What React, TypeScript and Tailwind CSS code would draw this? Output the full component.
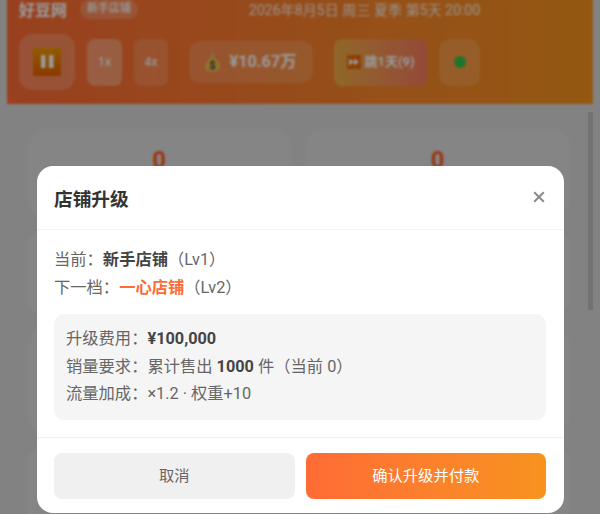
export default function App() {
  const cell = "rounded-2xl bg-[#dedede] border border-[#d8d8d8] flex justify-center";
  return (
    <div className="relative h-[514px] w-[600px] overflow-hidden bg-[#d9d9d9] font-['Roboto','Noto_Sans_CJK_SC',sans-serif]">
      {/* page underneath */}
      <div className="mx-[7px] h-[104px] bg-linear-to-r from-[#ff6b35] to-[#f7931e] px-3 text-white">
        <div className="flex h-[34px] items-start">
          <span className="w-[61px] text-base font-bold leading-[21px]">好豆网</span>
          <span className="flex h-[19px] w-[58px] items-center justify-center rounded-full bg-white/20 text-[11px] font-medium">新手店铺</span>
          <span className="ml-[111px] text-[14.1px] leading-[21px] text-white/85">2026年8月5日 周三 夏季 第5天 20:00</span>
        </div>
        <div className="flex items-center">
          <div className="flex h-[56px] w-[56px] items-center justify-center rounded-[14px] bg-white/20">
            <svg width="28" height="28" viewBox="0 0 28 28">
              <defs>
                <linearGradient id="pz" x1="0" y1="0" x2="0" y2="1">
                  <stop offset="0" stopColor="#f09a00" />
                  <stop offset="1" stopColor="#e86000" />
                </linearGradient>
              </defs>
              <rect width="28" height="28" fill="url(#pz)" />
              <rect x="8" y="7" width="4.5" height="13" fill="#fff" />
              <rect x="16" y="7" width="4.5" height="13" fill="#fff" />
            </svg>
          </div>
          <div className="ml-3 flex h-[47px] w-[35px] items-center justify-center rounded-lg bg-white/30 text-xs font-medium text-white/90">1x</div>
          <div className="ml-3 flex h-[47px] w-[34px] items-center justify-center rounded-lg bg-white/15 text-xs font-medium text-white/90">4x</div>
          <div className="ml-[21px] flex h-[42px] w-[124px] items-center justify-center gap-[9px] rounded-xl bg-white/15 text-[16.3px] font-bold">
            <svg width="15" height="19" viewBox="0 0 15 19">
              <path d="M5.5 0.5h4l-1 3.5h-2z" fill="#d9b98a" />
              <path d="M5.5 4.5h4C12 7 15 10 15 13.5 15 17 12 18.5 7.5 18.5S0 17 0 13.5C0 10 3 7 5.5 4.5z" fill="#f2c14e" />
              <text x="7.5" y="16" textAnchor="middle" fontSize="11" fontWeight="700" fill="#3f3f3f">$</text>
            </svg>
            <span>¥10.67万</span>
          </div>
          <div className="ml-[21px] flex h-[47px] w-[93px] items-center justify-center gap-1 rounded-lg bg-linear-to-r from-[#f0ac44] to-[#f87a5e] text-[13px] font-semibold">
            <svg width="14" height="14" viewBox="0 0 14 14">
              <rect width="14" height="14" fill="#e86a00" />
              <path d="M2 3.5 7 7 2 10.5zM7 3.5 12 7 7 10.5z" fill="#fff" />
            </svg>
            <span>跳1天(9)</span>
          </div>
          <div className="ml-3 flex h-[47px] w-[41px] items-center justify-center rounded-xl bg-white/15">
            <span className="h-3 w-3 rounded-full bg-[#34c04a]" />
          </div>
        </div>
      </div>

      <div className="ml-[26px] mr-[29px] mt-[25px] grid grid-cols-2 grid-rows-[87px_85px_103px_80px] gap-x-3 gap-y-[14px]">
        {[0, 1, 2, 3, 4, 5, 6, 7].map((i) => (
          <div key={i} className={cell}>
            {i < 2 && <span className="mt-[16px] text-[24px] font-bold leading-[28px] text-[#ff5a1f]">0</span>}
          </div>
        ))}
      </div>

      {/* dimming layer and dialog */}
      <div className="absolute inset-0 flex items-end bg-black/40 pb-px pl-[37px] backdrop-blur-[1px]">
        <div className="w-[527px] rounded-2xl bg-white">
          <div className="flex h-[64px] items-center justify-between border-b border-[#f3f3f3] pl-[17px] pr-[19px]">
            <span className="mt-[4px] text-[18.7px] font-bold text-[#333]">店铺升级</span>
            <svg width="12" height="12" viewBox="0 0 12 12" className="mt-[-1px]">
              <path d="M1.2 1.2 10.8 10.8M10.8 1.2 1.2 10.8" stroke="#8a8a8a" strokeWidth="2" />
            </svg>
          </div>
          <div className="border-b border-[#f0f0f0] pb-[17px] pl-[17px] pr-[18px] pt-[16px]">
            <div className="text-[16.3px] leading-[28px] text-[#666]">
              当前：<b className="font-bold text-[#444]">新手店铺</b>（Lv1）
            </div>
            <div className="text-[16.3px] leading-[28px] text-[#666]">
              下一档：<b className="font-bold text-[#ff6b35]">一心店铺</b>（Lv2）
            </div>
            <div className="mt-3 rounded-[10px] bg-[#f5f5f5] pb-[13px] pl-3 pr-3 pt-[11px] text-[16.3px] leading-[27.2px] text-[#666]">
              <div>升级费用：<b className="font-bold text-[#444]">¥100,000</b></div>
              <div>销量要求：累计售出 <b className="font-bold text-[#444]">1000</b> 件（当前 0）</div>
              <div>流量加成：×1.2 · 权重+10</div>
            </div>
          </div>
          <div className="flex gap-[11px] pb-[14px] pl-[17px] pr-[18px] pt-[15px]">
            <button className="h-[46px] flex-1 rounded-lg bg-[#f0f0f0] text-[15.3px] font-normal text-[#666]">取消</button>
            <button className="h-[46px] flex-1 rounded-lg bg-linear-to-r from-[#ff6b35] to-[#f7931e] text-[15.3px] font-normal text-white">确认升级并付款</button>
          </div>
        </div>
      </div>

      {/* scrollbar thumb */}
      <div className="absolute left-[588px] top-[112px] h-[198px] w-[5px] bg-[#737373]" />
    </div>
  );
}
